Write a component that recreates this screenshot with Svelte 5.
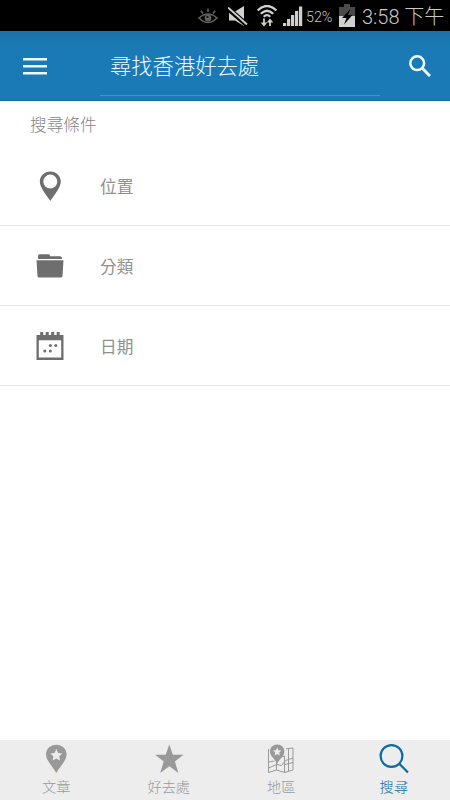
<script>
    const filters = [
        { icon: "pin", label: "位置" },
        { icon: "folder", label: "分類" },
        { icon: "calendar", label: "日期" },
    ];

    const tabs = [
        { icon: "article", label: "文章" },
        { icon: "star", label: "好去處" },
        { icon: "map", label: "地區" },
        { icon: "search", label: "搜尋" },
    ];

    let active = $state("search");
    let bars = [3, 7, 11, 15, 19.5];
</script>

<div class="screen">
    <div class="status">
        <svg class="eye" width="20" height="17" viewBox="0 0 20 17" fill="none" stroke="#626262" stroke-width="1.6">
            <path d="M1 10Q10 2 19 10Q10 19 1 10Z" />
            <circle cx="10" cy="10" r="2.6" fill="#626262" />
            <path d="M10 4V.5M5 5.500L3 2.800M15 5.500l2-2.700" />
            <circle cx="9.500" cy="9" r="1.100" fill="#111" stroke="none" />
        </svg>
        <svg class="mute" width="20" height="20" viewBox="0 0 20 20">
            <path d="M1 5.500h6L16 0v20l-9-5.500H1z" fill="#d0d0d0" />
            <path d="M-1 1.500l20 17.500" stroke="#000" stroke-width="5" />
            <path d="M0 1.500l19 17" stroke="#d0d0d0" stroke-width="1.8" />
        </svg>
        <svg class="wifi" width="20" height="22" viewBox="0 0 20 22" fill="none" stroke="#d0d0d0" stroke-width="2.3">
            <path d="M.7 5.500Q10-3.500 19.300 5.500M3.800 8.800Q10 2.600 16.200 8.800M6.800 11.800Q10 8.600 13.200 11.800" />
            <path d="M7 13.500v6M13 21v-6" stroke-width="1.8" />
            <path d="M3.700 17.500h6.600L7 21.500zM9.700 17.500l3.300-4 3.300 4z" fill="#d0d0d0" stroke="none" />
        </svg>
        <svg class="signal" width="20" height="20" viewBox="0 0 20 20" fill="#d0d0d0">
            {#each bars as h, i}
                <rect x={i * 4} y={20 - h} width="3.2" height={h} />
            {/each}
        </svg>
        <span class="percent">52%</span>
        <svg class="battery" width="16" height="23" viewBox="0 0 16 23">
            <path d="M5 0h6v3h5v9H0V3h5z" fill="#4a4a4a" />
            <path d="M0 12h16v11H0z" fill="#d0d0d0" />
            <path d="M11.500 5L3 14h4.500L5 20.500 13.500 11H9z" fill="#000" />
        </svg>
        <span class="time">3:58 下午</span>
    </div>

    <header>
        <svg width="24" height="17" viewBox="0 0 24 17" fill="#eefaff">
            <path d="M0 0h24v2.500H0zM0 7h24v2.500H0zM0 14h24v2.500H0z" />
        </svg>
        <div class="query">尋找香港好去處</div>
        <svg width="22" height="22" viewBox="0 0 22 22" fill="none" stroke="#eefaff">
            <circle cx="8.200" cy="8.200" r="6.900" stroke-width="2.500" />
            <path d="M13 13l8 8" stroke-width="3" />
        </svg>
    </header>

    <main>
        <h2>搜尋條件</h2>
        {#each filters as item}
            <div class="row">
                <svg width="28" height="30" viewBox="0 0 28 30" fill="#6e6e6e">
                    {#if item.icon === "pin"}
                        <path fill-rule="evenodd" d="M14.300.500C8.300.500 3.800 5 3.800 10.600c0 5.800 5.700 12.400 10.500 19.400 4.800-7 10.500-13.600 10.500-19.400C24.800 5 20.300.500 14.300.500zM14.300 3.600a7 7 0 1 1 0 14 7 7 0 0 1 0-14z" />
                    {:else if item.icon === "folder"}
                        <path d="M2 8V5Q2 3.300 3.500 3.300h9Q14 3.300 14.200 5.300h10q2 0 2 2.700z" />
                        <path d="M.500 9.300h27L26.500 25q-.1 1.500-1.500 1.500H3q-1.400 0-1.500-1.500z" />
                    {:else}
                        <path fill-rule="evenodd" d="M.500 4h27v25H.500zM2.800 9.300v17.200h22.400V9.300z" />
                        <path d="M4.200 1h3v3.500h-3zM9.700 1h3v3.500h-3zM15.200 1h3v3.500h-3zM20.700 1h3v3.500h-3z" />
                        <circle cx="14.300" cy="14.500" r="1.500" />
                        <circle cx="19.800" cy="14.500" r="1.500" />
                        <circle cx="8.800" cy="20" r="1.500" />
                        <circle cx="14.300" cy="20" r="1.500" />
                    {/if}
                </svg>
                <span>{item.label}</span>
            </div>
        {/each}
    </main>

    <nav>
        {#each tabs as tab}
            <button class:active={tab.icon === active} onclick={() => (active = tab.icon)}>
                <svg width="30" height="30" viewBox="0 0 30 30" fill="currentColor">
                    {#if tab.icon === "article"}
                        <path d="M15.300.800C9.300.800 5 5.100 5 10.600 5 16.500 11.300 22 15.300 29c4-7 10.300-12.500 10.300-18.400C25.600 5.100 21.300.800 15.300.800z" />
                        <path class="cutout" d="M15.300 5l1.800 3.900 4.200.5-3.100 2.900.8 4.200-3.700-2.100-3.700 2.100.8-4.200-3.100-2.900 4.200-.5z" />
                    {:else if tab.icon === "star"}
                        <path d="M15.300.400l3.600 10.400h10.600l-8.600 6.700 3.500 11.600-9.100-6.800-9.100 6.800 3.500-11.600-8.600-6.700h10.600z" />
                    {:else if tab.icon === "map"}
                        <path class="line" d="M2.500 5v23.500l8-2.500 8 2.500 8.500-2.500V4l-7 .8M10.500 18v8M18.500 12v16.500M22.500 4.500V27M2.500 18l6-1M2.500 24l8-3.500 5 1 4-5 7.500-2.500M15 13l4-1M19 20.500l8-2" />
                        <path d="M11.200.600C7 .600 4 3.700 4 7.600c0 4.600 5 7.400 7.200 12.400 2.200-5 7.200-7.800 7.200-12.400C18.400 3.700 15.400.600 11.200.600z" />
                        <path class="cutout" d="M11.200 3.500l1.200 2.700 3 .3-2.200 2 .6 2.900-2.600-1.500-2.600 1.500.6-2.900-2.200-2 3-.3z" />
                    {:else}
                        <circle class="glass" cx="12.500" cy="12" r="10.900" />
                        <path class="glass" d="M20.300 19.800l8.700 8.700" />
                    {/if}
                </svg>
                <span>{tab.label}</span>
            </button>
        {/each}
    </nav>
</div>

<style>
    :global(body) {
        margin: 0;
    }

    .screen {
        display: flex;
        flex-direction: column;
        width: 450px;
        height: 800px;
        overflow: hidden;
        background: #fff;
        font-family: "Noto Sans CJK TC", sans-serif;
        font-weight: 300;
    }

    .status {
        display: flex;
        align-items: flex-start;
        height: 31px;
        box-sizing: border-box;
        padding-left: 198px;
        background: #000;
        color: #c8c8c8;
        font-family: Roboto, "Noto Sans CJK TC", sans-serif;
        white-space: nowrap;
    }
    .status svg {
        flex: none;
    }
    .eye {
        margin-top: 8px;
    }
    .mute {
        margin: 6px 0 0 10px;
    }
    .wifi {
        margin: 5px 0 0 9px;
    }
    .signal {
        margin: 6px 0 0 6px;
    }
    .percent {
        width: 33px;
        margin-left: 3px;
        font-size: 14.300px;
        line-height: 34px;
    }
    .battery {
        margin-top: 4px;
    }
    .time {
        margin-left: 7px;
        font-size: 20px;
        line-height: 34px;
    }

    header {
        display: flex;
        align-items: center;
        height: 70px;
        box-sizing: border-box;
        padding: 0 19px 0 23px;
        background: linear-gradient(#1a72a5, #1a7ab5 14px, #1a7ab5 68px, #126da5);
    }
    .query {
        width: 280px;
        height: 65px;
        box-sizing: border-box;
        margin: 0 29px 5px 53px;
        padding-left: 10px;
        border-bottom: 1px solid #3b97cd;
        color: #eefaff;
        font-size: 21.300px;
        line-height: 67px;
    }

    main {
        flex: 1;
    }
    h2 {
        height: 45px;
        margin: 0;
        padding-left: 30px;
        color: #858585;
        font-size: 16.700px;
        font-weight: 300;
        line-height: 46px;
    }
    .row {
        display: flex;
        align-items: center;
        gap: 36px;
        height: 80px;
        box-sizing: border-box;
        padding-left: 36px;
        border-bottom: 1px solid #e4e4e4;
        color: #909090;
        font-size: 16.700px;
        font-weight: 400;
    }

    nav {
        display: grid;
        grid-template-columns: repeat(4, 1fr);
        height: 60px;
        background: #ededed;
    }
    button {
        display: flex;
        flex-direction: column;
        align-items: center;
        padding: 4px 0 0;
        border: 0;
        background: none;
        color: #999;
        font: inherit;
        font-size: 14.200px;
        line-height: 25px;
    }
    button.active {
        color: #0b6ba3;
    }
    .cutout {
        fill: #ededed;
    }
    .line,
    .glass {
        fill: none;
        stroke: currentColor;
    }
    .glass {
        stroke-width: 2.200;
    }
</style>
